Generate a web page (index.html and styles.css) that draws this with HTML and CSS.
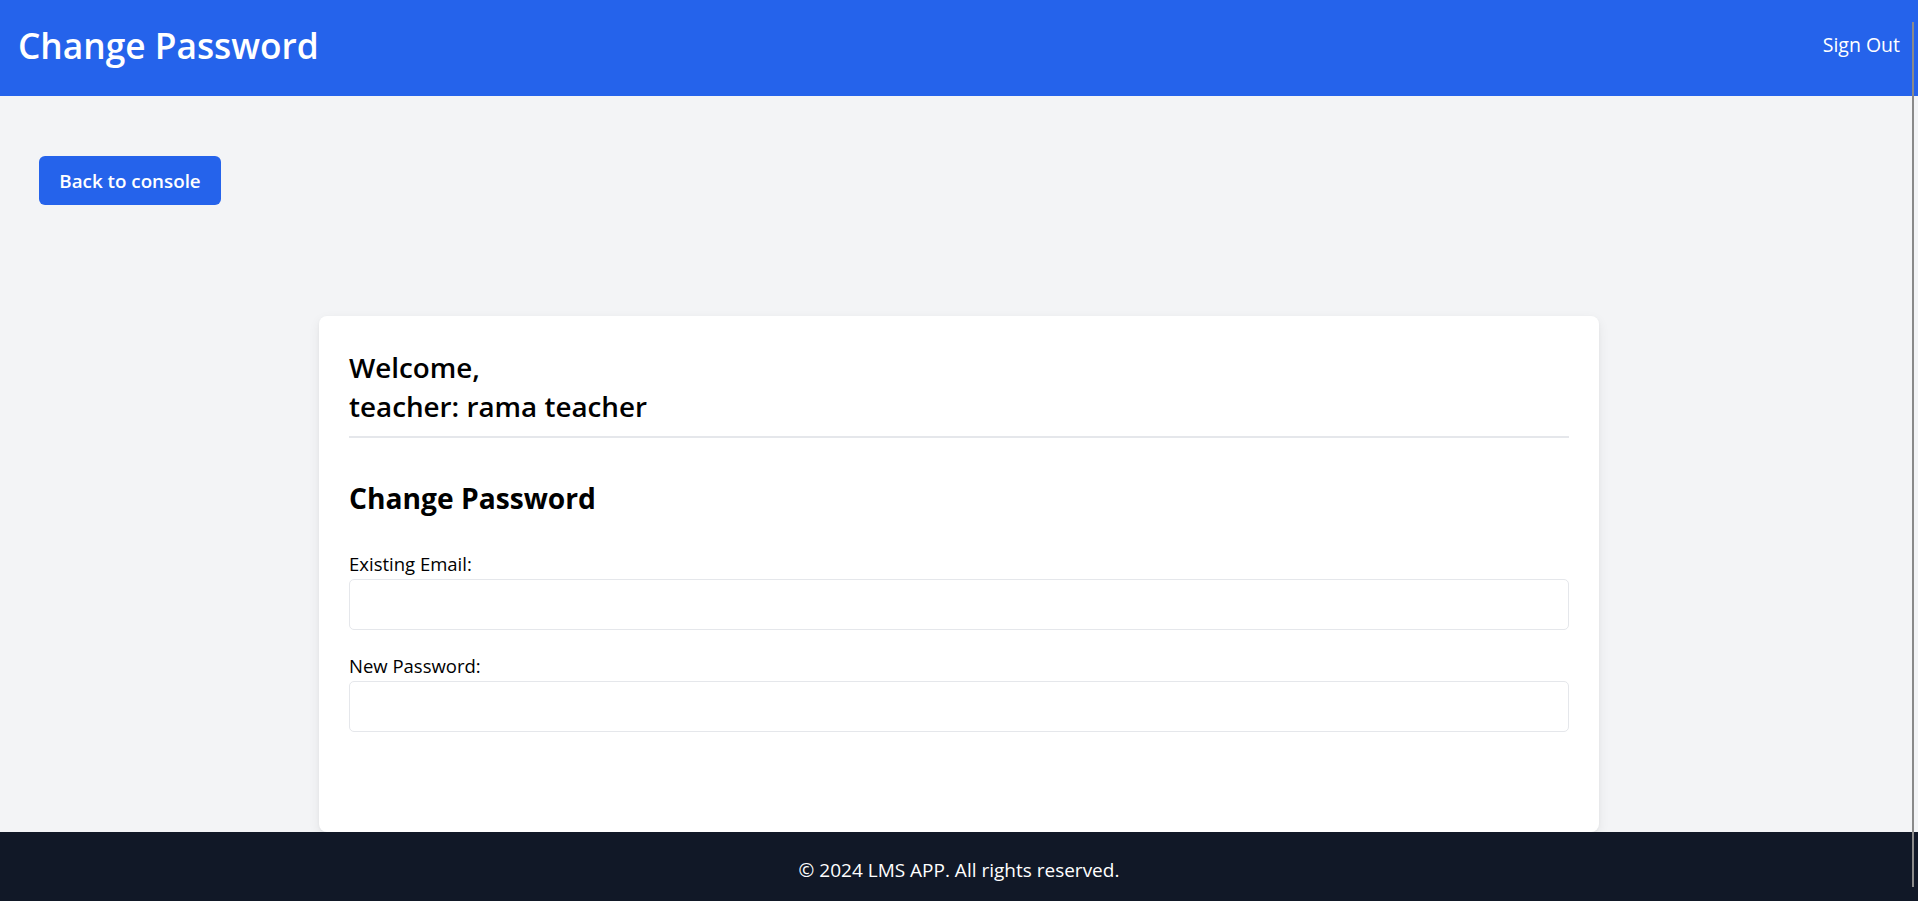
FILE: index.html
```html
<!DOCTYPE html>
<html lang="en">
<head>
<meta charset="utf-8">
<title>Change Password</title>
<link rel="stylesheet" href="styles.css">
</head>
<body>
<header class="topbar">
  <h1 class="topbar-title">Change Password</h1>
  <a class="signout" href="#">Sign Out</a>
</header>
<main class="page">
  <div class="actions">
    <button class="btn-back" type="button">Back to console</button>
  </div>
  <section class="card">
    <h2 class="welcome">Welcome,<br>teacher: rama teacher</h2>
    <h3 class="form-title">Change Password</h3>
    <form class="form">
      <div class="field">
        <label class="field-label" for="email">Existing Email:</label>
        <input class="field-input" id="email" type="email">
      </div>
      <div class="field">
        <label class="field-label" for="pw">New Password:</label>
        <input class="field-input" id="pw" type="password">
      </div>
    </form>
  </section>
</main>
<footer class="footer">© 2024 LMS APP. All rights reserved.</footer>
<div class="scroll-thumb" aria-hidden="true"></div>
</body>
</html>
```

FILE: styles.css
```css
* { box-sizing: border-box; }

html, body {
  margin: 0;
  padding: 0;
}

body {
  background: #f3f4f6;
  font-family: "Open Sans", "Noto Sans", sans-serif;
  color: #000;
  overflow: hidden;
}

.topbar {
  height: 96px;
  background: #2563eb;
  display: flex;
  align-items: center;
  justify-content: space-between;
  padding: 0 18px 6px 18px;
}

.topbar-title {
  margin: 0;
  color: #fff;
  font-size: 35.3px;
  font-weight: 600;
  line-height: 40px;
}

.signout {
  color: #fff;
  text-decoration: none;
  font-size: 19.5px;
  line-height: 28px;
}

.page {
  padding: 60px 0 0 0;
}

.actions {
  padding-left: 39px;
}

.btn-back {
  background: #2563eb;
  color: #fff;
  border: 0;
  border-radius: 6px;
  font-family: inherit;
  font-size: 18.8px;
  font-weight: 600;
  line-height: 28px;
  padding: 10.5px 20px;
  width: 182px;
  height: 49px;
}

.card {
  width: 1280px;
  margin: 111px auto 0;
  background: #fff;
  border-radius: 8px;
  box-shadow: 0 4px 12px rgba(0, 0, 0, 0.07), 0 1px 3px rgba(0, 0, 0, 0.04);
  padding: 32px 30px 30px;
  height: 516px;
}

.welcome {
  margin: 0;
  font-size: 27.8px;
  font-weight: 600;
  line-height: 39px;
  padding-bottom: 10px;
  border-bottom: 2px solid #e5e7eb;
}

.form-title {
  margin: 42px 0 34px;
  font-size: 28.2px;
  font-weight: 700;
  line-height: 36px;
}

.form {
  display: flex;
  flex-direction: column;
  gap: 22px;
}

.field {
  display: flex;
  flex-direction: column;
}

.field-label {
  font-size: 18.5px;
  line-height: 28px;
}

.field-input {
  margin-top: 1px;
  height: 51px;
  border: 1px solid #e5e7eb;
  border-radius: 5px;
  background: #fff;
  font-family: inherit;
  font-size: 18px;
  padding: 0 12px;
}

.footer {
  background: #111827;
  color: #fff;
  text-align: center;
  font-size: 19px;
  line-height: 28px;
  padding: 24px 0 17px;
}

.scroll-thumb {
  position: fixed;
  top: 22px;
  right: 4px;
  width: 2px;
  height: 865px;
  background: #8a8a8a;
}
```
